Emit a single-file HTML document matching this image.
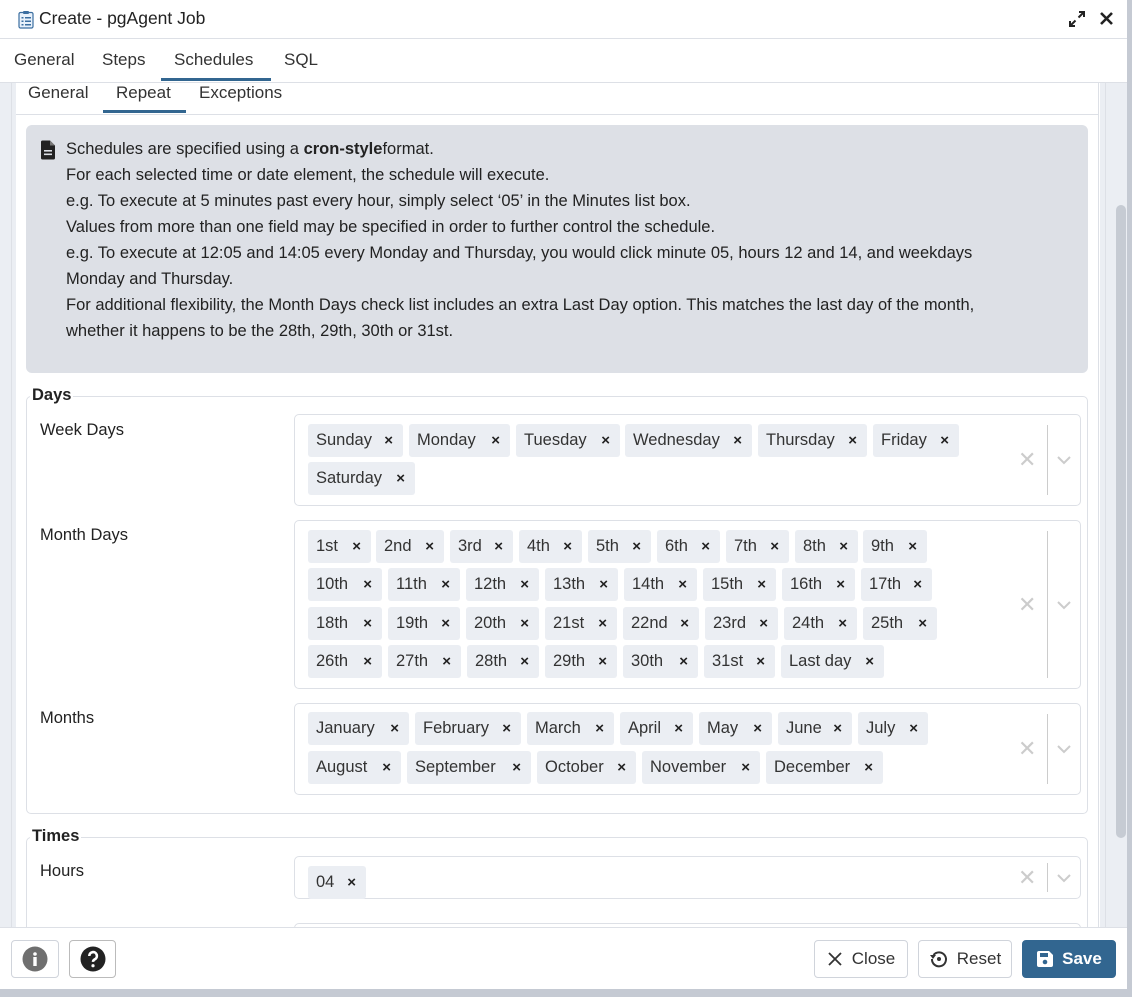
<!DOCTYPE html>
<html><head><meta charset="utf-8"><style>
*{box-sizing:border-box;margin:0;padding:0}
body{width:1132px;height:997px;position:relative;background:#c5cad3;font-family:"Liberation Sans",sans-serif;color:#222;overflow:hidden;font-size:16px}
.a{position:absolute}
.dlg{left:0;top:0;width:1127px;height:989px;background:#fff;overflow:hidden}
.chip{position:absolute;height:33px;background:#ebeef3;border-radius:3px;display:flex;align-items:center;justify-content:space-between;padding:0 10px 0 8px;font-size:16.5px;color:#333}
.chip b{font-size:15px;font-weight:bold;color:#222}
.box{position:absolute;left:294px;width:787px;border:1px solid #dde0e6;border-radius:5px}
.ctl{position:absolute;right:0;top:10px;bottom:10px;width:62px}
.ctl .x{position:absolute;left:0px;top:50%;transform:translateY(-50%);color:#ccc;font-size:22px}
.ctl .sep{position:absolute;left:29px;top:0;bottom:0;border-left:1px solid #ccc}
.ctl svg{position:absolute;left:38px;top:50%;margin-top:-5px}
.lbl{position:absolute;left:40px;font-size:16.5px;color:#222}
.btn{position:absolute;top:940px;height:38px;border:1px solid #d0d4db;border-radius:4px;background:#fff;display:flex;align-items:center;justify-content:center;font-size:17px;color:#333}
</style></head><body>
<div class="a dlg">
 <svg class="a" style="left:18px;top:10px" width="16" height="19" viewBox="0 0 16 19"><rect x="1" y="2.5" width="14" height="15.5" rx="1.5" fill="#e8f1fb" stroke="#3b6ea0" stroke-width="1.2"/><rect x="5" y="1" width="6" height="3" rx="1" fill="#3b6ea0"/><g fill="#3b6ea0"><rect x="3.5" y="7" width="2" height="1.5"/><rect x="7" y="7" width="6" height="1.5"/><rect x="3.5" y="10.5" width="2" height="1.5"/><rect x="7" y="10.5" width="6" height="1.5"/><rect x="3.5" y="14" width="2" height="1.5"/><rect x="7" y="14" width="6" height="1.5"/></g></svg>
 <div class="a" style="left:39px;top:8px;font-size:17.5px;color:#222">Create - pgAgent Job</div>
 <svg class="a" style="left:1068px;top:10px" width="18" height="18" viewBox="0 0 18 18"><path d="M11 2h5v5M16 2l-5.5 5.5M7 16H2v-5M2 16l5.5-5.5" stroke="#222" stroke-width="2" fill="none"/></svg>
 <svg class="a" style="left:1099px;top:11px" width="15" height="15" viewBox="0 0 15 15"><path d="M2 2l11 11M13 2L2 13" stroke="#222" stroke-width="2.6"/></svg>
 <div class="a" style="left:0;top:38px;width:1127px;border-top:1px solid #dde0e6"></div>
 <div class="a" style="left:14px;top:50px;font-size:17px;color:#333">General</div>
 <div class="a" style="left:102px;top:50px;font-size:17px;color:#333">Steps</div>
 <div class="a" style="left:174px;top:50px;font-size:17px;color:#333">Schedules</div>
 <div class="a" style="left:284px;top:50px;font-size:17px;color:#333">SQL</div>
 <div class="a" style="left:161px;top:78px;width:110px;height:3px;background:#326690"></div>
 <div class="a" style="left:0;top:82px;width:1127px;border-top:1px solid #dde0e6"></div>
 <div class="a" style="left:0;top:83px;width:16px;height:844px;background:#ebeef3"></div>
 <div class="a" style="left:11px;top:83px;height:844px;border-left:1px solid #dde0e6"></div>
 <div class="a" style="left:1100px;top:83px;width:27px;height:844px;background:#ebeef3"></div>
 <div class="a" style="left:1098px;top:83px;height:844px;border-left:1px solid #dde0e6"></div>
 <div class="a" style="left:1105px;top:83px;height:844px;border-left:1px solid #dde0e6"></div>
 <div class="a" style="left:1116px;top:205px;width:10px;height:633px;background:#c6cbd3;border-radius:5px"></div>
 <div class="a" style="left:28px;top:83px;font-size:17px;color:#333">General</div>
 <div class="a" style="left:116px;top:83px;font-size:17px;color:#333">Repeat</div>
 <div class="a" style="left:199px;top:83px;font-size:17px;color:#333">Exceptions</div>
 <div class="a" style="left:103px;top:110px;width:83px;height:3px;background:#326690"></div>
 <div class="a" style="left:16px;top:114px;width:1082px;border-top:1px solid #dde0e6"></div>
 <div class="a" style="left:26px;top:125px;width:1062px;height:248px;background:#dde0e6;border-radius:6px"></div>
 <svg class="a" style="left:40px;top:140px" width="16" height="20" viewBox="0 0 16 20"><path d="M1 2a1.5 1.5 0 0 1 1.5-1.5H10l5 5V18a1.5 1.5 0 0 1-1.5 1.5h-11A1.5 1.5 0 0 1 1 18z" fill="#222"/><path d="M10 .5V5.5h5" fill="#777"/><rect x="4" y="10" width="8" height="1.6" fill="#dde0e6"/><rect x="4" y="13.5" width="8" height="1.6" fill="#dde0e6"/></svg>
 <div class="a" style="left:66px;top:136px;font-size:16.5px;line-height:26px;color:#222;width:990px">Schedules are specified using a <b>cron-style</b>format.<br>For each selected time or date element, the schedule will execute.<br>e.g. To execute at 5 minutes past every hour, simply select ‘05’ in the Minutes list box.<br>Values from more than one field may be specified in order to further control the schedule.<br>e.g. To execute at 12:05 and 14:05 every Monday and Thursday, you would click minute 05, hours 12 and 14, and weekdays<br>Monday and Thursday.<br>For additional flexibility, the Month Days check list includes an extra Last Day option. This matches the last day of the month,<br>whether it happens to be the 28th, 29th, 30th or 31st.</div>
 <div class="a" style="left:26px;top:396px;width:1062px;height:418px;border:1px solid #dde0e6;border-radius:5px"></div>
 <div class="a" style="left:30px;top:386px;padding:0 2px;background:#fff;font-weight:bold;font-size:16.5px">Days</div>
 <div class="lbl" style="top:421px">Week Days</div>
 <div class="lbl" style="top:526px">Month Days</div>
 <div class="lbl" style="top:709px">Months</div>
 <div class="box" style="top:414px;height:92px"><div class="ctl"><span class="x">✕</span><span class="sep"></span><svg width="16" height="10" viewBox="0 0 16 10"><path d="M2 2l6 6 6-6" stroke="#ccc" stroke-width="2" fill="none"/></svg></div></div>
 <div class="box" style="top:520px;height:169px"><div class="ctl"><span class="x">✕</span><span class="sep"></span><svg width="16" height="10" viewBox="0 0 16 10"><path d="M2 2l6 6 6-6" stroke="#ccc" stroke-width="2" fill="none"/></svg></div></div>
 <div class="box" style="top:703px;height:92px"><div class="ctl"><span class="x">✕</span><span class="sep"></span><svg width="16" height="10" viewBox="0 0 16 10"><path d="M2 2l6 6 6-6" stroke="#ccc" stroke-width="2" fill="none"/></svg></div></div>
 <div class="chip" style="left:308px;top:424px;width:95px">Sunday<b>×</b></div>
 <div class="chip" style="left:409px;top:424px;width:101px">Monday<b>×</b></div>
 <div class="chip" style="left:516px;top:424px;width:104px">Tuesday<b>×</b></div>
 <div class="chip" style="left:625px;top:424px;width:127px">Wednesday<b>×</b></div>
 <div class="chip" style="left:758px;top:424px;width:109px">Thursday<b>×</b></div>
 <div class="chip" style="left:873px;top:424px;width:86px">Friday<b>×</b></div>
 <div class="chip" style="left:308px;top:462px;width:107px">Saturday<b>×</b></div>
 <div class="chip" style="left:308px;top:530px;width:63px">1st<b>×</b></div>
 <div class="chip" style="left:376px;top:530px;width:68px">2nd<b>×</b></div>
 <div class="chip" style="left:450px;top:530px;width:63px">3rd<b>×</b></div>
 <div class="chip" style="left:519px;top:530px;width:63px">4th<b>×</b></div>
 <div class="chip" style="left:588px;top:530px;width:63px">5th<b>×</b></div>
 <div class="chip" style="left:657px;top:530px;width:63px">6th<b>×</b></div>
 <div class="chip" style="left:726px;top:530px;width:63px">7th<b>×</b></div>
 <div class="chip" style="left:795px;top:530px;width:63px">8th<b>×</b></div>
 <div class="chip" style="left:863px;top:530px;width:64px">9th<b>×</b></div>
 <div class="chip" style="left:308px;top:568px;width:74px">10th<b>×</b></div>
 <div class="chip" style="left:388px;top:568px;width:72px">11th<b>×</b></div>
 <div class="chip" style="left:466px;top:568px;width:73px">12th<b>×</b></div>
 <div class="chip" style="left:545px;top:568px;width:73px">13th<b>×</b></div>
 <div class="chip" style="left:624px;top:568px;width:73px">14th<b>×</b></div>
 <div class="chip" style="left:703px;top:568px;width:73px">15th<b>×</b></div>
 <div class="chip" style="left:782px;top:568px;width:73px">16th<b>×</b></div>
 <div class="chip" style="left:861px;top:568px;width:71px">17th<b>×</b></div>
 <div class="chip" style="left:308px;top:607px;width:74px">18th<b>×</b></div>
 <div class="chip" style="left:388px;top:607px;width:72px">19th<b>×</b></div>
 <div class="chip" style="left:466px;top:607px;width:73px">20th<b>×</b></div>
 <div class="chip" style="left:545px;top:607px;width:72px">21st<b>×</b></div>
 <div class="chip" style="left:623px;top:607px;width:76px">22nd<b>×</b></div>
 <div class="chip" style="left:705px;top:607px;width:73px">23rd<b>×</b></div>
 <div class="chip" style="left:784px;top:607px;width:73px">24th<b>×</b></div>
 <div class="chip" style="left:863px;top:607px;width:74px">25th<b>×</b></div>
 <div class="chip" style="left:308px;top:645px;width:74px">26th<b>×</b></div>
 <div class="chip" style="left:388px;top:645px;width:73px">27th<b>×</b></div>
 <div class="chip" style="left:467px;top:645px;width:72px">28th<b>×</b></div>
 <div class="chip" style="left:545px;top:645px;width:72px">29th<b>×</b></div>
 <div class="chip" style="left:623px;top:645px;width:75px">30th<b>×</b></div>
 <div class="chip" style="left:704px;top:645px;width:71px">31st<b>×</b></div>
 <div class="chip" style="left:781px;top:645px;width:103px">Last day<b>×</b></div>
 <div class="chip" style="left:308px;top:712px;width:101px">January<b>×</b></div>
 <div class="chip" style="left:415px;top:712px;width:106px">February<b>×</b></div>
 <div class="chip" style="left:527px;top:712px;width:87px">March<b>×</b></div>
 <div class="chip" style="left:620px;top:712px;width:73px">April<b>×</b></div>
 <div class="chip" style="left:699px;top:712px;width:73px">May<b>×</b></div>
 <div class="chip" style="left:778px;top:712px;width:74px">June<b>×</b></div>
 <div class="chip" style="left:858px;top:712px;width:70px">July<b>×</b></div>
 <div class="chip" style="left:308px;top:751px;width:93px">August<b>×</b></div>
 <div class="chip" style="left:407px;top:751px;width:124px">September<b>×</b></div>
 <div class="chip" style="left:537px;top:751px;width:99px">October<b>×</b></div>
 <div class="chip" style="left:642px;top:751px;width:118px">November<b>×</b></div>
 <div class="chip" style="left:766px;top:751px;width:117px">December<b>×</b></div>
 <div class="a" style="left:26px;top:837px;width:1062px;height:200px;border:1px solid #dde0e6;border-radius:5px"></div>
 <div class="a" style="left:30px;top:827px;padding:0 2px;background:#fff;font-weight:bold;font-size:16.5px">Times</div>
 <div class="lbl" style="top:862px">Hours</div>
 <div class="box" style="top:856px;height:43px"><div class="ctl" style="top:6px;bottom:6px"><span class="x">✕</span><span class="sep"></span><svg width="16" height="10" viewBox="0 0 16 10"><path d="M2 2l6 6 6-6" stroke="#ccc" stroke-width="2" fill="none"/></svg></div></div>
 <div class="chip" style="left:308px;top:866px;width:58px">04<b>×</b></div>
 <div class="box" style="top:923px;height:60px"></div>
 <div class="a" style="left:0;top:927px;width:1127px;height:62px;background:#fff;border-top:1px solid #dde0e6"></div>
 <div class="btn" style="left:11px;width:48px"><svg width="26" height="26" viewBox="0 0 26 26"><circle cx="13" cy="13" r="12.5" fill="#6f6f6f"/><circle cx="13" cy="8" r="1.8" fill="#fff"/><rect x="11.3" y="11" width="3.4" height="9" fill="#fff"/></svg></div>
 <div class="btn" style="left:69px;width:47px;border-color:#bbb"><svg width="26" height="26" viewBox="0 0 26 26"><circle cx="13" cy="13" r="12.5" fill="#222"/><path d="M9.3 10a3.8 3.8 0 1 1 5.5 3.3c-1.2.6-1.8 1.2-1.8 2.6" stroke="#fff" stroke-width="2.6" fill="none"/><circle cx="13" cy="19.7" r="1.6" fill="#fff"/></svg></div>
 <div class="btn" style="left:814px;width:94px"><svg width="16" height="16" viewBox="0 0 16 16" style="margin-right:9px"><path d="M2 2l12 12M14 2L2 14" stroke="#333" stroke-width="1.8"/></svg>Close</div>
 <div class="btn" style="left:918px;width:94px"><svg width="20" height="20" viewBox="0 0 20 20" style="margin-right:8px"><path d="M4.5 6A7 7 0 1 1 3 10" stroke="#333" stroke-width="2" fill="none"/><path d="M1 6h6L4 10z" fill="#333"/><circle cx="10" cy="10" r="2" fill="#333"/></svg>Reset</div>
 <div class="btn" style="left:1022px;width:94px;background:#326690;border-color:#326690;color:#fff;font-weight:bold"><svg width="18" height="18" viewBox="0 0 18 18" style="margin-right:8px"><path d="M1 3a2 2 0 0 1 2-2h10l4 4v10a2 2 0 0 1-2 2H3a2 2 0 0 1-2-2z" fill="#fff"/><rect x="4" y="3" width="8" height="4" fill="#326690"/><circle cx="9" cy="12" r="2.3" fill="#326690"/></svg>Save</div>
</div>
</body></html>
